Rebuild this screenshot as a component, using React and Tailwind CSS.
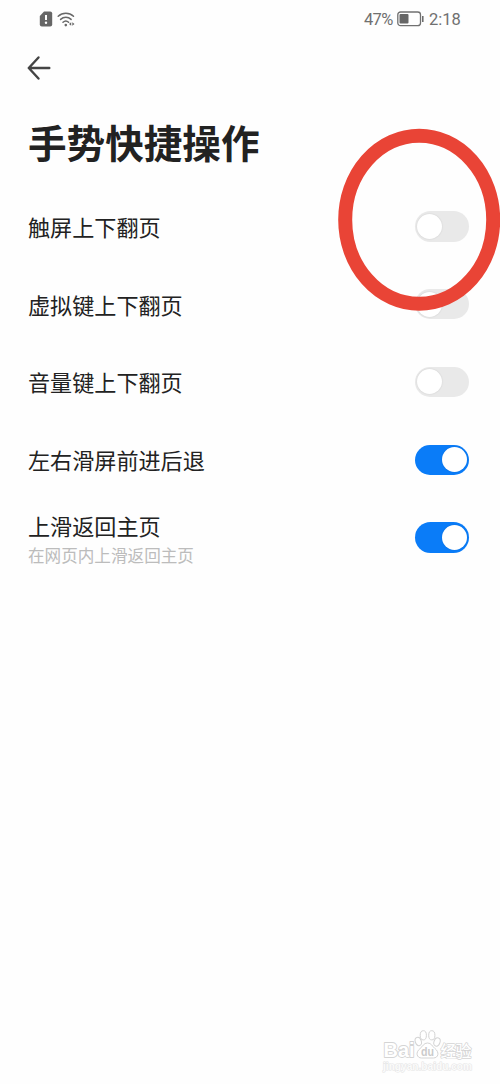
const rows = [
  { label: '触屏上下翻页', on: false },
  { label: '虚拟键上下翻页', on: false },
  { label: '音量键上下翻页', on: false },
  { label: '左右滑屏前进后退', on: true },
  { label: '上滑返回主页', hint: '在网页内上滑返回主页', on: true },
];

function Switch({ on }) {
  return (
    <div
      role="switch"
      aria-checked={on}
      className={`flex h-[30.5px] w-[54.5px] shrink-0 items-center rounded-full px-[2.5px] ${
        on ? 'justify-end bg-[#0a7cf8]' : 'justify-start bg-[#e9e9e9]'
      }`}
    >
      <div className="size-[25px] rounded-full bg-white shadow-[0_0_2px_rgba(0,0,0,0.12)]" />
    </div>
  );
}

function StatusBar() {
  return (
    <div className="flex h-[38px] items-center justify-between pr-[39px] pl-[39px] text-[#707070]">
      <div className="flex items-center gap-[4px]">
        <svg width="14" height="16" viewBox="0 0 14 16">
          <path d="M5 .5h6.2A2 2 0 0 1 13.200 2.500v11a2 2 0 0 1-2 2H2.800a2 2 0 0 1-2-2V5z" fill="#666" />
          <path d="M7 4v5" stroke="#fff" strokeWidth="2" />
          <circle cx="7" cy="11.700" r="1.200" fill="#fff" />
        </svg>
        <svg width="20" height="17" viewBox="0 0 20 17" fill="none" stroke="#686868" strokeWidth="1.500" strokeLinecap="round">
          <path d="M1.200 5.200c4.300-4 11-4 15.300 0M3.600 8.400c3-2.800 7.500-2.800 10.500 0M6 11.300c1.600-1.500 4-1.500 5.600 0" />
          <circle cx="8.800" cy="14.100" r="1.300" fill="#686868" stroke="none" />
          <path d="M14.200 11.200v3.600L12 13zM15.300 11.200v3.600l2.200-1.800z" fill="#686868" stroke="none" />
        </svg>
      </div>
      <div className="flex items-center text-[16.5px] leading-none">
        <span className="w-[32px] pt-[2px] whitespace-nowrap tracking-[-0.7px]">47%</span>
        <svg width="29" height="16" viewBox="0 0 29 16" fill="none">
          <rect x="1.800" y="1" width="22.700" height="13.700" rx="2.800" stroke="#707070" strokeWidth="1.300" />
          <rect x="3.500" y="3" width="9" height="9.500" rx="1" fill="#666" />
          <path d="M26.800 5v6" stroke="#666" strokeWidth="1.500" />
        </svg>
        <span className="ml-[4px] w-[32px] pt-[2px] whitespace-nowrap">2:18</span>
      </div>
    </div>
  );
}

function Watermark() {
  return (
    <svg
      className="absolute top-[1026px] left-[380px]"
      width="100"
      height="52"
      viewBox="0 0 100 52"
      fontFamily="'Liberation Sans', 'Noto Sans CJK SC', sans-serif"
      fontWeight="700"
      fill="#fff"
      stroke="#d4d4d4"
      strokeWidth="1"
      strokeLinejoin="round"
    >
      <text x="3.500" y="31" fontSize="20" textLength="31" lengthAdjust="spacingAndGlyphs" strokeWidth="1.800" paintOrder="stroke">Bai</text>
      <ellipse cx="38.300" cy="15.500" rx="3" ry="4.200" transform="rotate(-20 38.300 15.500)" />
      <ellipse cx="43.300" cy="9.300" rx="3.100" ry="4.600" />
      <ellipse cx="51.800" cy="9.300" rx="3.100" ry="4.600" />
      <ellipse cx="57" cy="16" rx="3" ry="4.200" transform="rotate(20 57 16)" />
      <path d="M47.500 17c-4 0-4.500 3.300-7.500 5.600-4.800 3.800-3.300 9.400 1.600 9.400h11.800c5 0 6.300-5.800 1.600-9.400-3-2.400-3.500-5.600-7.500-5.600z" />
      <text x="41" y="30" fontSize="12" textLength="13" lengthAdjust="spacingAndGlyphs" fill="#cbcbcb" stroke="none">du</text>
      <text x="60.500" y="30.500" fontSize="16" textLength="31" fontFamily="'Noto Sans CJK SC', sans-serif" fontWeight="500" strokeWidth="1.400" paintOrder="stroke">经验</text>
      <text x="3" y="44" fontSize="10.500" textLength="89" lengthAdjust="spacingAndGlyphs" fill="#fbfbfb" stroke="#e4e4e4" strokeWidth="1.100" paintOrder="stroke">jingyan.baidu.com</text>
    </svg>
  );
}

export default function App() {
  return (
    <main className="relative flex h-[1084px] w-[500px] flex-col overflow-hidden bg-[#fefefe] font-['Roboto','Noto_Sans_CJK_SC',sans-serif] text-[#222]">
      <StatusBar />
      <div className="flex h-[60px] items-center pl-[27px]">
        <svg width="25" height="26" viewBox="0 0 25 26" fill="none" stroke="#444" strokeWidth="2.400" strokeLinecap="round" strokeLinejoin="round">
          <path d="M11.500 2.500 1.800 13 11.500 23.500M1.800 13h20.500" />
        </svg>
      </div>
      <h1 className="flex h-[90px] items-center pt-[5px] pl-[28px] text-[38.6px] leading-none font-bold">手势快捷操作</h1>
      <div className="-mt-[0.5px] flex flex-col pr-[31px] pl-[28px]">
        {rows.map((row) => (
          <div key={row.label} className="flex h-[77.8px] items-center justify-between">
            <div className={`flex flex-col gap-[8px] ${row.hint ? 'pt-[6px]' : 'pt-[3px]'}`}>
              <span className="text-[22.1px] leading-[24px]">{row.label}</span>
              {row.hint && <span className="pt-px text-[16.6px] leading-[18px] text-[#bcbcbc]">{row.hint}</span>}
            </div>
            <Switch on={row.on} />
          </div>
        ))}
      </div>
      <svg className="absolute top-[120px] left-[330px]" width="170" height="200" viewBox="0 0 170 200" fill="none">
        <ellipse cx="89.200" cy="99.800" rx="74" ry="84" stroke="#e94436" strokeWidth="14" />
      </svg>
      <Watermark />
    </main>
  );
}
